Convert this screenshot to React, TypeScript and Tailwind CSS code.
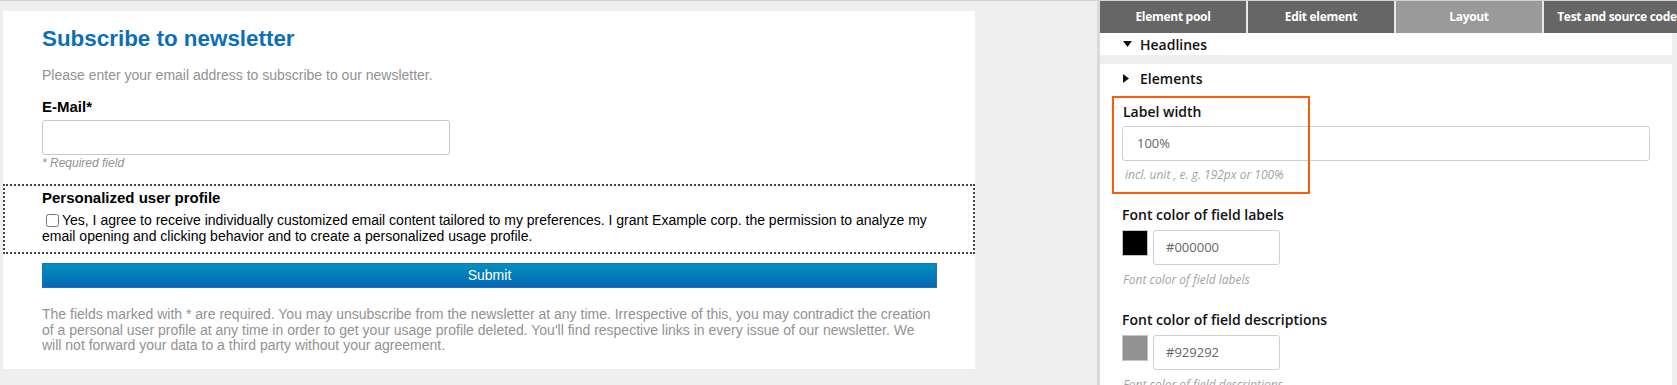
import type { ReactNode } from 'react';

const TABS = ['Element pool', 'Edit element', 'Layout', 'Test and source code'];

function Caret({ open }: { open: boolean }) {
  return open ? (
    <svg width="9" height="6" viewBox="0 0 9 6" className="shrink-0">
      <path d="M0 0 H9 L4.5 6 Z" fill="#111" />
    </svg>
  ) : (
    <svg width="6" height="9" viewBox="0 0 6 9" className="shrink-0">
      <path d="M0 0 V9 L6 4.5 Z" fill="#111" />
    </svg>
  );
}

function FieldLabel({ children, className = '' }: { children: ReactNode; className?: string }) {
  return (
    <div className={`text-[14px] leading-[18px] font-semibold text-[#111] ${className}`}>{children}</div>
  );
}

function Hint({ children, className = '' }: { children: ReactNode; className?: string }) {
  return <div className={`text-[12px] leading-[16px] italic text-[#a3a3a3] ${className}`}>{children}</div>;
}

function ColorField({ label, value }: { label: string; value: string }) {
  return (
    <>
      <FieldLabel className="mt-[23px]">{label}</FieldLabel>
      <div className="mt-[6px] flex items-start gap-[5px]">
        <div className="w-[26px] h-[26px] border border-[#c4c4c4]" style={{ background: value }} />
        <div className="w-[127px] h-[35px] border border-[#d0d0d0] rounded-[3px] flex items-center pl-[12px] text-[13px] text-[#666]">
          {value}
        </div>
      </div>
      <Hint className="mt-[7px] pl-[1px]">{label}</Hint>
    </>
  );
}

function NewsletterForm() {
  return (
    <div
      className="w-[972px] h-[358px] bg-white pt-[15px] pl-[39px] pr-[38px]"
      style={{ fontFamily: '"Liberation Sans", Arial, sans-serif' }}
    >
      <h1 className="text-[22.4px] leading-[26px] font-bold text-[#0b6fb6]">Subscribe to newsletter</h1>
      <p className="mt-[15px] text-[14px] leading-[17px] text-[#929292]">
        Please enter your email address to subscribe to our newsletter.
      </p>
      <div className="mt-[14px] text-[15px] leading-[18px] font-bold text-black">E-Mail*</div>
      <div className="mt-[4px] w-[408px] h-[35px] border border-[#c8c8c8] rounded-[3px]" />
      <div className="mt-[1px] text-[12px] leading-[14px] italic text-[#929292]">* Required field</div>

      <div className="mt-[14px] -ml-[39px] -mr-[38px] border-2 border-dotted border-[#444] pt-[3px] pb-[8px] pl-[37px] pr-[36px]">
        <div className="text-[15px] leading-[18px] font-bold text-black">Personalized user profile</div>
        <label className="mt-[5px] block text-[14px] leading-[16px] text-black">
          <input type="checkbox" className="ml-[4px] mr-[3px] w-[13px] h-[13px] align-[-2px]" />
          Yes, I agree to receive individually customized email content tailored to my preferences. I grant
          Example corp. the permission to analyze my email opening and clicking behavior and to create a
          personalized usage profile.
        </label>
      </div>

      <button
        type="button"
        className="mt-[9px] w-full h-[25px] border border-[#1f6fc2] bg-gradient-to-b from-[#048fbd] to-[#0668b6] text-white text-[14px]"
      >
        Submit
      </button>

      <p className="mt-[19px] text-[14px] leading-[15.5px] text-[#929292]">
        The fields marked with * are required. You may unsubscribe from the newsletter at any time. Irrespective
        of this, you may contradict the creation of a personal user profile at any time in order to get your
        usage profile deleted. You'll find respective links in every issue of our newsletter. We will not forward
        your data to a third party without your agreement.
      </p>
    </div>
  );
}

function LayoutPanel() {
  return (
    <div
      className="flex-1 min-w-0 overflow-hidden border-l-[3px] border-[#dadada] flex flex-col"
      style={{ fontFamily: '"Open Sans", "Noto Sans", sans-serif' }}
    >
      <div className="h-[32px] flex gap-[2px] bg-[#e8e8e8] shrink-0">
        {TABS.map((t) => (
          <div
            key={t}
            className={`w-[146px] shrink-0 flex items-center justify-center text-[12px] font-bold text-white whitespace-nowrap tracking-[-0.3px] ${
              t === 'Layout' ? 'bg-[#9a9a9a]' : 'bg-[#666666]'
            }`}
          >
            {t}
          </div>
        ))}
      </div>

      <div className="flex-1 flex flex-col pr-[5px]">
        <div className="h-[22px] bg-white flex items-center gap-[8px] pl-[23px] text-[14px] font-semibold text-[#111]">
          <Caret open />
          Headlines
        </div>
        <div className="h-[9px]" />
        <div className="relative flex-1 bg-white pl-[22px] pr-[22px]">
          <div className="h-[29px] flex items-center gap-[11px] pl-[1px] text-[14px] font-semibold text-[#111]">
            <Caret open={false} />
            Elements
          </div>

          <FieldLabel className="mt-[10px] pl-[1px]">Label width</FieldLabel>
          <div className="mt-[5px] h-[35px] border border-[#d0d0d0] rounded-[3px] flex items-center pl-[14px] text-[13px] text-[#666]">
            100%
          </div>
          <Hint className="mt-[6px] pl-[3px]">incl. unit , e. g. 192px or 100%</Hint>

          <ColorField label="Font color of field labels" value="#000000" />
          <ColorField label="Font color of field descriptions" value="#929292" />

          <div className="absolute left-[12px] top-[32px] w-[198px] h-[98px] border-2 border-[#ff5a0a]" />
        </div>
      </div>
    </div>
  );
}

export default function App() {
  return (
    <div className="w-[1677px] h-[385px] overflow-hidden flex bg-[#efefef] border-t border-[#d2d2d2]">
      <div className="w-[1097px] shrink-0 pl-[3px] pt-[10px]">
        <NewsletterForm />
      </div>
      <LayoutPanel />
    </div>
  );
}
